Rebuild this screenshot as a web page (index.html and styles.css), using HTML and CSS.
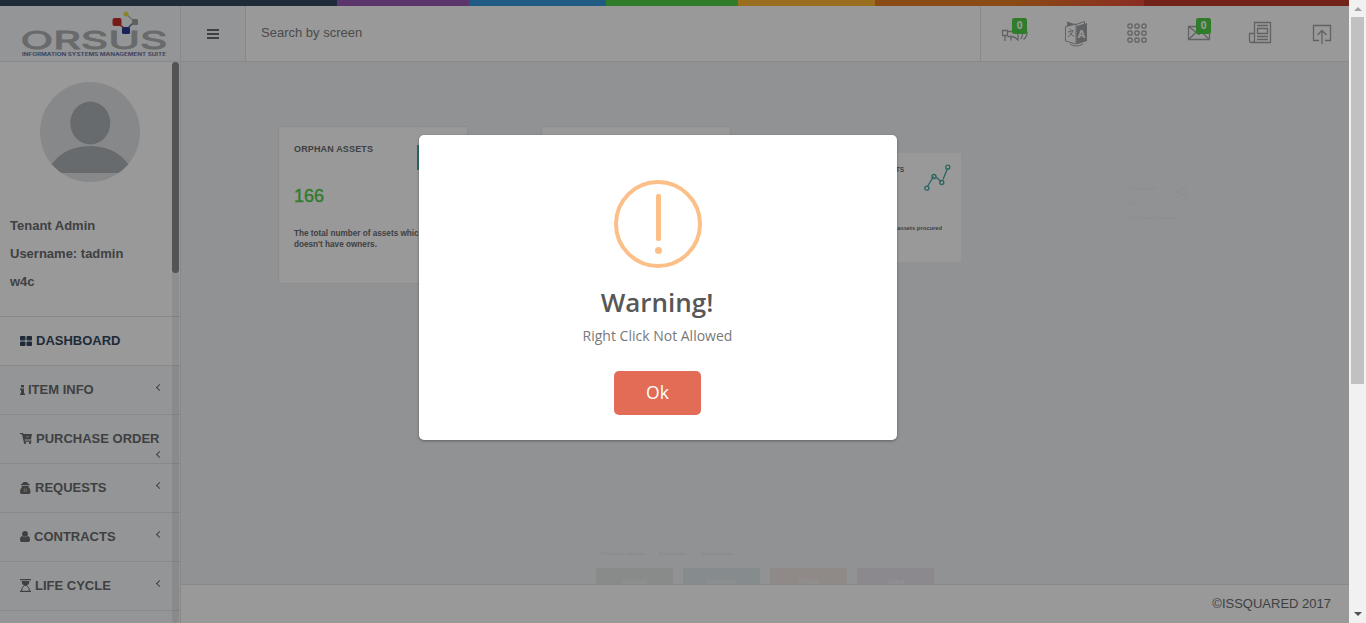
FILE: index.html
```html
<!DOCTYPE html>
<html lang="en">
<head>
<meta charset="utf-8">
<title>ORSUS Dashboard</title>
<link rel="stylesheet" href="styles.css">
</head>
<body>
<div class="window">
  <div class="app">
    <div class="color-line"></div>
    <header class="header">
      <div class="logo">
        <svg width="180" height="55" viewBox="0 6 180 55">
          <text class="logo-name" x="20.500" y="48.700" textLength="147" lengthAdjust="spacingAndGlyphs">ORSUS</text>
          <path d="M126 14l9 8" fill="none" stroke="#b5b5a8" stroke-width="1.200"/>
          <path d="M118 23l8 7" stroke="#c4302b" stroke-width="1.600"/>
          <path d="M126 30l8-8" stroke="#5a67a8" stroke-width="1.500"/>
          <rect x="112.500" y="18" width="9" height="8" rx="2" fill="#c4302b"/>
          <rect x="122" y="27" width="8" height="7" rx="1.500" fill="#2c3a92"/>
          <rect x="132" y="19" width="6" height="6" rx="1.500" fill="#a0a0a0"/>
          <circle cx="126" cy="14" r="2.500" fill="#e8dc4c"/>
          <text class="logo-tag" x="22" y="56" textLength="144" lengthAdjust="spacingAndGlyphs">INFORMATION SYSTEMS MANAGEMENT SUITE</text>
        </svg>
      </div>
      <div class="menu-toggle"><i></i><i></i><i></i></div>
      <div class="search">Search by screen</div>
      <div class="tools">
        <div class="tool">
          <svg viewBox="0 0 28 28"><path d="M1.500 11.500h5v5h-5zM6.500 12.500h4.500q3 0 6-2.500v11q-3-3-6-3.500H6.500M4 17v5M10 17.500v4M19.500 20q2-2 2-5M22.500 20.500q4-3 3.500-8"/></svg>
          <span class="badge">0</span>
        </div>
        <div class="tool">
          <svg viewBox="0 0 28 28"><path class="fill" d="M14.500 7l10.500-3v18l-10.500 3.500zM5 2.500l9 3-9 2z"/><path d="M3.500 7.500l10.500-2.500v20l-10.500-3zM14 5.500l8.500-3v3M8 25q6 4 13 0" stroke-width="1"/><path d="M6 13l5.500-1.500M8 9.500l1 2M11 11.500q-1 4-5 6.500M7.500 14l4.500 3.500" stroke-width="1"/><text class="glyph-a" x="15.500" y="19">A</text></svg>
        </div>
        <div class="tool">
          <svg viewBox="0 0 28 28"><g><circle cx="7" cy="7" r="2.200"/><circle cx="14" cy="7" r="2.200"/><circle cx="21" cy="7" r="2.200"/><circle cx="7" cy="14" r="2.200"/><circle cx="14" cy="14" r="2.200"/><circle cx="21" cy="14" r="2.200"/><circle cx="7" cy="21" r="2.200"/><circle cx="14" cy="21" r="2.200"/><circle cx="21" cy="21" r="2.200"/></g></svg>
        </div>
        <div class="tool">
          <svg viewBox="0 0 28 28"><path d="M3.500 7.500h21v13h-21zM3.500 7.500l10.500 8 10.500-8M3.500 20.500l7.500-7M24.500 20.500l-7.500-7"/></svg>
          <span class="badge">0</span>
        </div>
        <div class="tool">
          <svg viewBox="0 0 28 28"><path d="M8.500 3.500h16v20h-19q-2 0-2-2v-7h5zM8.500 14v7q0 2.500-3 2.500M11.500 9.500h10v5h-10zM11 6.500h11M11 17.500h11M11 20.500h11"/></svg>
        </div>
        <div class="tool">
          <svg viewBox="0 0 28 28"><path d="M11 21.500h-5.500v-15h17v15h-5.500M14 25v-13M9.500 16l4.500-4.500 4.500 4.500"/></svg>
        </div>
      </div>
    </header>
    <div class="body">
      <aside class="sidebar">
        <div class="side-main">
          <div class="profile">
            <svg class="avatar" viewBox="0 0 100 100"><defs><clipPath id="disc"><circle cx="50" cy="50" r="50"/></clipPath></defs><g clip-path="url(#disc)"><path d="M0 0h100v100H0z" fill="#e0e3e6"/><ellipse cx="50.300" cy="41" rx="20" ry="21.500" fill="#acb3b7"/><path d="M6 91q14-27 44-27t44 27z" fill="#acb3b7"/></g></svg>
            <div class="person"><div>Tenant Admin</div><div>Username: tadmin</div><div>w4c</div></div>
          </div>
          <ul class="nav">
            <li class="active"><svg width="12" height="10" viewBox="0 0 12 10"><rect width="5.500" height="4.500" rx="1"/><rect x="6.500" width="5.500" height="4.500" rx="1"/><rect y="5.500" width="5.500" height="4.500" rx="1"/><rect x="6.500" y="5.500" width="5.500" height="4.500" rx="1"/></svg>DASHBOARD</li>
            <li><svg width="5" height="10" viewBox="0 0 5 10"><path d="M1 0h3v2.500H1zM0 3.500h4V8.500h1V10H0V8.500h1V5H0z"/></svg>ITEM INFO<b class="arrow"></b></li>
            <li class="wrapped"><svg width="12" height="11" viewBox="0 0 12 11"><path d="M0 0h3l.6 1H12l-1 5.500H4.700l.3 1h6.500v1.300H3.700L2 1.300H0z"/><circle cx="5" cy="9.800" r="1.200"/><circle cx="10" cy="9.800" r="1.200"/><path d="M6 3h3v1.300H6z" fill="#aaa"/></svg>PURCHASE ORDER<b class="arrow"></b></li>
            <li><svg width="11" height="12" viewBox="0 0 11 12"><path d="M2.500 1.500L3.500 0h3.500l1 1.500L9.500 2v1.200H1V2zM1.500 4h7.500l-.5 1q2 1.500 2 4.500 0 2.500-1.500 2.500H1.500Q0 12 0 9.500 0 6.500 2 5z"/><path d="M3.800 6.500h1v3.500h-1zM5.800 6.500h1v3.500h-1z" fill="#c9b9a4"/></svg>REQUESTS<b class="arrow"></b></li>
            <li><svg width="10" height="11" viewBox="0 0 10 11"><circle cx="5" cy="2.900" r="2.900"/><path d="M2 5q3 2.500 6 0 2 .5 2 4 0 2-1.500 2h-7Q0 11 0 9q0-3.500 2-4z"/></svg>CONTRACTS<b class="arrow"></b></li>
            <li><svg width="11" height="13" viewBox="0 0 11 13"><path d="M0 0h11v1.200H0zM0 11.800h11V13H0zM1.500 2h8q0 3-2.500 4.500H4Q1.500 5 1.500 2z"/><path d="M1.500 12q0-4 3-5.500h2q3 1.500 3 5.500" fill="none" stroke="currentColor"/></svg>LIFE CYCLE<b class="arrow"></b></li>
            <li></li>
          </ul>
        </div>
        <div class="side-track"><div class="side-thumb"></div></div>
      </aside>
      <main class="main">
        <section class="dashboard">
          <div class="cards">
            <article class="card large">
              <div class="card-head">ORPHAN ASSETS<i class="box-icon"></i></div>
              <div class="value">166</div>
              <p>The total number of assets which<br>doesn't have owners.</p>
            </article>
            <article class="card large"></article>
            <article class="card small">
              <div class="card-head"><span>ASSETS</span><svg class="chart" viewBox="0 0 27 28"><path d="M3.500 22.500L9.500 12.500M12 13l5 4.500M19 15.500l4.500-11"/><circle cx="2.800" cy="24.200" r="2"/><circle cx="10" cy="12.500" r="2"/><circle cx="17.800" cy="18.500" r="2"/><circle cx="23.800" cy="3.200" r="2"/></svg></div>
              <p>assets procured</p>
            </article>
            <article class="ghost"><div>TOTAL ASSETS<svg viewBox="0 0 12 12"><circle cx="6" cy="6" r="3"/><path d="M3 0l2 3M9 0L7 3M0 6h3M9 6h3M1 12l3-4M11 12L8 8"/></svg></div><strong>166</strong><p>The total number of assets</p></article>
          </div>
          <div class="apps">
            <div class="tabs"><span>IT Operations Modules</span><span>External Links</span><span>IT Internal Links</span></div>
            <div class="tiles"><div class="global">Global</div><div class="identity">Identity</div><div class="ipam">IPAM</div><div class="jobs">Jobs</div></div>
          </div>
        </section>
        <footer class="footer">©ISSQUARED 2017</footer>
      </main>
    </div>
    <div class="overlay">
      <div class="modal">
        <div class="warning"><i></i><b></b></div>
        <h2>Warning!</h2>
        <p>Right Click Not Allowed</p>
        <button type="button">Ok</button>
      </div>
    </div>
  </div>
  <div class="scrollbar"><i class="up"></i><div class="thumb"></div><i class="down"></i></div>
</div>
</body>
</html>
```

FILE: styles.css
```css
* { box-sizing: border-box; }
body { margin: 0; font: 13px/18px "Liberation Sans", Arial, sans-serif; color: #6a6c6f; overflow: hidden; }
p, h2, ul { margin: 0; padding: 0; }
.window { display: flex; width: 1366px; height: 623px; overflow: hidden; }
.app { position: relative; display: flex; flex-direction: column; width: 1349px; height: 623px; background: #f1f3f6; overflow: hidden; }
.color-line { flex: none; height: 6px; background: linear-gradient(to right, #34495e 337px, #9b59b6 337px, #9b59b6 469px, #3498db 469px, #3498db 606px, #4fd048 606px, #4fd048 738px, #ffb935 738px, #ffb935 875px, #e67e22 875px, #e67e22 1008px, #e74c3c 1144px, #c0392b 1144px); }

.header { display: flex; flex: none; height: 56px; background: #fff; border-bottom: 1px solid #e4e5e7; }
.logo { width: 181px; background: #f7f9fa; border-right: 1px solid #e4e5e7; }
.logo svg { display: block; }
.logo-name { font: 400 24.5px Inter, sans-serif; fill: #b0b1b2; stroke: #b0b1b2; stroke-width: .9px; }
.logo-tag { font: bold 4.2px Inter, sans-serif; fill: #6874a6; }
.menu-toggle { display: flex; flex-direction: column; align-items: center; justify-content: center; gap: 2px; width: 65px; background: #f7f9fa; border-right: 1px solid #e4e5e7; }
.menu-toggle i { width: 12px; height: 2px; background: #6a6c6f; }
.search { flex: 1; padding: 18px 15px; color: #7c7d80; }
.tools { display: flex; flex: none; width: 369px; padding: 0 0 2px 3px; border-left: 1px solid #e4e5e7; overflow: hidden; }
.tool { position: relative; display: flex; flex: none; align-items: center; justify-content: center; width: 61.4px; }
.tool svg { width: 28px; height: 28px; fill: none; stroke: #a2a4a7; stroke-width: 1.3; }
.tool .fill { fill: #a2a4a7; stroke: none; }
.tool .glyph-a { font: bold 11px "Liberation Sans", sans-serif; fill: #fff; stroke: none; }
.badge { position: absolute; top: 12px; left: 28px; width: 15px; height: 16px; border-radius: 2px; background: #4fd048; color: #fff; font: bold 10px/15px "Open Sans", sans-serif; text-align: center; }

.body { display: flex; flex: 1; min-height: 0; }
.sidebar { display: flex; flex: none; width: 181px; background: #f7f9fa; border-right: 1px solid #e4e5e7; overflow: hidden; }
.side-main { width: 180px; flex: none; }
.profile { height: 254px; padding-top: 20px; background: #fff; }
.avatar { display: block; width: 100px; height: 100px; margin-left: 40px; }
.person { padding: 30px 10px 0; font-weight: bold; line-height: 28px; }
.nav { list-style: none; font-weight: bold; }
.nav li { position: relative; display: flex; align-items: center; gap: 4px; height: 49px; padding-left: 20px; border-top: 1px solid #e4e5e7; white-space: nowrap; }
.nav li:nth-child(2) { gap: 3px; }
.nav svg { fill: currentColor; margin-top: -1px; }
.nav .active { background: #fff; color: #34495e; }
.arrow { position: absolute; left: 156.5px; top: 19px; width: 5px; height: 5px; border-left: 1.3px solid #6a6c6f; border-bottom: 1.3px solid #6a6c6f; transform: rotate(45deg); }
.wrapped .arrow { top: 37px; }
.side-track { flex: none; width: 7px; height: 561px; margin-left: -8px; z-index: 1; border-radius: 4px; background: rgba(100, 110, 95, .12); }
.side-thumb { height: 211px; border-radius: 4px; background: #8b8b8b; }

.main { display: flex; flex: 1; flex-direction: column; min-width: 0; }
.dashboard { display: flex; flex: 1; flex-direction: column; justify-content: space-between; min-height: 0; overflow: hidden; }
.cards { display: flex; align-items: flex-start; height: 222px; padding: 64px 0 0 97px; font-weight: bold; }
.card { flex: none; background: #fff; border: 1px solid #e9eaec; }
.large { width: 190px; height: 158px; margin-right: 72.5px; padding: 14px 15px; font-size: 8.2px; line-height: 11px; }
.card-head { position: relative; white-space: nowrap; }
.large .card-head { height: 34px; font-size: 9px; line-height: 16px; letter-spacing: .15px; }
.box-icon { position: absolute; left: 123px; top: 4px; width: 26px; height: 25px; border: 2px solid #45b3a9; }
.value { height: 53px; font-size: 18px; line-height: 43px; font-weight: normal; color: #52ce4c; -webkit-text-stroke: .4px #52ce4c; }
.small { width: 131px; height: 109px; margin: 27px 0 0 27px; padding: 10.500px 19px 0 10px; border-width: 0; font-size: 5.8px; line-height: 8px; text-align: right; }
.small .card-head { display: flex; align-items: flex-start; justify-content: space-between; height: 60px; margin-right: -9px; padding-left: 38px; }
.small .card-head span { padding-top: 2px; font-size: 6.5px; }
.chart { width: 27px; height: 28px; fill: none; stroke: #45a99f; stroke-width: 1.3; }
.ghost { width: 70px; margin: 60px 0 0 165px; font-size: 4px; line-height: 5px; color: #ebeef1; white-space: nowrap; }
.ghost div { display: flex; justify-content: space-between; width: 62px; height: 14px; }
.ghost svg { width: 12px; height: 12px; fill: none; stroke: #e6efef; stroke-width: .8; }
.ghost strong { display: block; height: 15px; font-size: 6px; font-weight: normal; line-height: 7px; }
.apps { width: 338px; height: 37px; margin-left: 415px; font-weight: bold; }
.tabs { display: flex; gap: 15px; height: 21px; padding-left: 5px; font-size: 4px; line-height: 14px; color: #e6e7ea; }
.tiles { display: grid; grid-template-columns: repeat(4, 77px); gap: 10px; height: 16px; overflow: hidden; font-size: 8px; line-height: 27px; color: #f1f2f4; text-align: center; }
.global { background: #e3e8e5; }
.identity { background: #dfeaed; }
.ipam { background: #efe6e2; }
.jobs { background: #e9e5ed; }
.footer { flex: none; height: 39px; padding: 10px 18px; background: #fff; border-top: 1px solid #e4e5e7; text-align: right; }

.overlay { position: absolute; inset: 0; z-index: 5; background: rgba(0, 0, 0, .4); }
.modal { display: flex; flex-direction: column; align-items: center; width: 478px; height: 305px; margin: 135px 0 0 419px; padding-top: 45px; background: #fff; border-radius: 5px; box-shadow: 0 1px 3px rgba(0, 0, 0, .35); font-family: "Open Sans", sans-serif; }
.warning { display: flex; flex-direction: column; align-items: center; width: 88px; height: 88px; padding-top: 10px; border: 4px solid #fcbf87; border-radius: 50%; }
.warning i { width: 5px; height: 47px; border-radius: 2px; background: #fcbf87; }
.warning b { width: 7px; height: 7px; margin-top: 6px; border-radius: 50%; background: #fcbf87; }
.modal h2 { margin: 14px 2px 0 0; font-size: 26px; line-height: 40px; font-weight: 600; color: #575757; }
.modal p { margin: 4px 1px 0 0; font-size: 14px; line-height: 20px; color: #797979; }
.modal button { width: 87px; height: 44px; margin: 25px 1px 0 0; padding: 0 0 2px; border: 0; border-radius: 5px; background: #e36c57; color: #fff; font: 500 17.5px "Open Sans", sans-serif; }

.scrollbar { display: flex; flex-direction: column; align-items: center; justify-content: space-between; width: 17px; height: 623px; padding: 7px 0; background: #f1f1f1; }
.scrollbar i { flex: none; border: solid transparent; border-width: 0 4px; }
.scrollbar .up { border-bottom: 4px solid #a3a3a3; }
.scrollbar .down { border-top: 4px solid #505050; }
.thumb { width: 13px; height: 367px; margin: 6px 0 auto; background: #c1c1c1; }
```
